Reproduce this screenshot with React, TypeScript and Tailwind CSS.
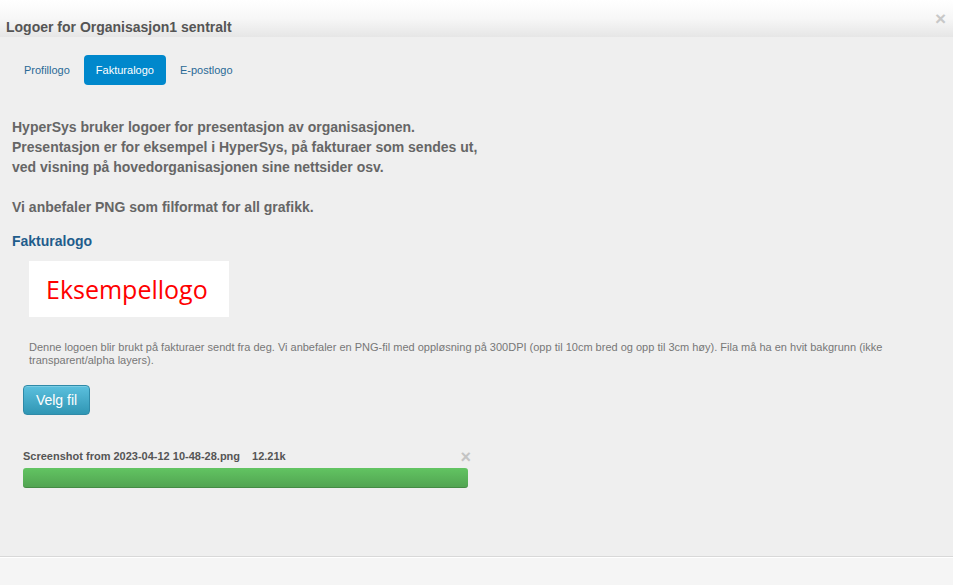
import React from "react";

const tabs = ["Profillogo", "Fakturalogo", "E-postlogo"];

export default function App() {
    const active = "Fakturalogo";
    return (
        <div className="flex h-[585px] w-[953px] flex-col overflow-hidden bg-[#efefef] font-['Liberation_Sans',Arial,sans-serif]">
            {/* header */}
            <div className="relative h-[37px] shrink-0 bg-gradient-to-b from-[#ffffff] via-[#f7f7f7] to-[#e6e6e6] pl-[6px] pt-[17px]">
                <h3 className="text-[14px] font-bold leading-[20px] text-[#555]">
                    Logoer for Organisasjon1 sentralt
                </h3>
                <button className="absolute right-[7px] top-[9px] text-[19px] font-bold leading-[20px] text-[#c8c8c8]">
                    ×
                </button>
            </div>

            {/* body */}
            <div className="flex-1 pt-[18px]">
                <ul className="flex gap-[2px] pl-[12px]">
                    {tabs.map((t) => (
                        <li
                            key={t}
                            className={
                                t === active
                                    ? "h-[30px] rounded-[4px] bg-[#0088cc] px-[12px] text-[11px] leading-[30px] text-white"
                                    : "h-[30px] px-[12px] text-[11px] leading-[30px] text-[#2a6a96]"
                            }
                        >
                            {t}
                        </li>
                    ))}
                </ul>

                <div className="mt-[32px] pl-[12px] text-[14px] font-bold leading-[20px] text-[#666]">
                    <p>
                        HyperSys bruker logoer for presentasjon av organisasjonen.
                        <br />
                        Presentasjon er for eksempel i HyperSys, på fakturaer som sendes ut,
                        <br />
                        ved visning på hovedorganisasjonen sine nettsider osv.
                    </p>
                    <p className="mt-[20px]">Vi anbefaler PNG som filformat for all grafikk.</p>
                    <h4 className="mt-[14px] text-[#1f5d8c]">Fakturalogo</h4>
                </div>

                <div className="ml-[29px] mt-[10px] flex h-[56px] w-[200px] items-center bg-white pl-[17px]">
                    <span className="font-['Open_Sans','Noto_Sans',sans-serif] text-[25px] leading-none text-[#ff0000]">
                        Eksempellogo
                    </span>
                </div>

                <p className="ml-[29px] mt-[24px] w-[900px] text-[11px] leading-[13px] text-[#777]">
                    Denne logoen blir brukt på fakturaer sendt fra deg. Vi anbefaler en PNG-fil med oppløsning på
                    300DPI (opp til 10cm bred og opp til 3cm høy). Fila må ha en hvit bakgrunn (ikke
                    transparent/alpha layers).
                </p>

                <button className="ml-[23px] mt-[18px] h-[30px] w-[67px] rounded-[4px] border border-[#2f8aa8] bg-gradient-to-b from-[#5bc0de] to-[#2f96b4] text-[14px] text-white shadow-[inset_0_1px_0_rgba(255,255,255,0.2)]">
                    Velg fil
                </button>

                <div className="ml-[23px] mt-[34px] w-[445px]">
                    <div className="relative flex h-[14px] items-center gap-[12px] text-[11px] font-bold text-[#555]">
                        <span>Screenshot from 2023-04-12 10-48-28.png</span>
                        <span>12.21k</span>
                        <span className="absolute right-[-3px] top-[-1px] text-[18px] font-bold leading-[18px] text-[#c4c4c4]">
                            ×
                        </span>
                    </div>
                    <div className="mt-[5px] h-[20px] rounded-[3px] bg-gradient-to-b from-[#62c462] to-[#51a351] shadow-[inset_0_-1px_0_rgba(0,0,0,0.15)]" />
                </div>
            </div>

            {/* footer */}
            <div className="h-[29px] shrink-0 border-t border-[#d8d8d8] bg-[#f5f5f5] shadow-[inset_0_1px_0_#ffffff]" />
        </div>
    );
}
